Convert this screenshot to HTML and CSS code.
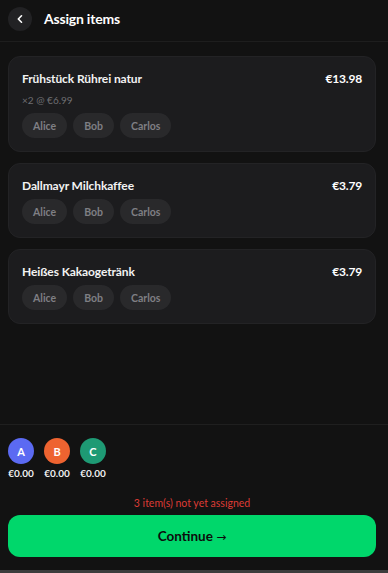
FILE: index.html
```html
<!DOCTYPE html>
<html lang="de">
<head>
<meta charset="utf-8">
<title>Assign items</title>
<link rel="stylesheet" href="styles.css">
</head>
<body>
<div class="app">
  <header class="header">
    <button class="back" aria-label="Back">
      <svg width="10" height="10" viewBox="0 0 10 10"><path d="M6.5 1.8 L3.3 5 L6.5 8.2" fill="none" stroke="#fff" stroke-width="1.6" stroke-linecap="round" stroke-linejoin="round"/></svg>
    </button>
    <h1 class="title">Assign items</h1>
  </header>
  <main class="list">
    <section class="card">
      <div class="row"><span class="name">Frühstück Rührei natur</span><span class="price">€13.98</span></div>
      <div class="sub">×2 @ €6.99</div>
      <div class="chips"><span class="chip">Alice</span><span class="chip">Bob</span><span class="chip">Carlos</span></div>
    </section>
    <section class="card">
      <div class="row"><span class="name">Dallmayr Milchkaffee</span><span class="price">€3.79</span></div>
      <div class="chips"><span class="chip">Alice</span><span class="chip">Bob</span><span class="chip">Carlos</span></div>
    </section>
    <section class="card">
      <div class="row"><span class="name">Heißes Kakaogetränk</span><span class="price">€3.79</span></div>
      <div class="chips"><span class="chip">Alice</span><span class="chip">Bob</span><span class="chip">Carlos</span></div>
    </section>
  </main>
  <footer class="footer">
    <div class="people">
      <div class="person"><span class="avatar a">A</span><span class="amt">€0.00</span></div>
      <div class="person"><span class="avatar b">B</span><span class="amt">€0.00</span></div>
      <div class="person"><span class="avatar c">C</span><span class="amt">€0.00</span></div>
    </div>
    <p class="warn">3 item(s) not yet assigned</p>
    <button class="continue">Continue <span class="arrow">→</span></button>
  </footer>
  <div class="strip"></div>
</div>
</body>
</html>
```
FILE: styles.css
```css
* { box-sizing: border-box; }
html, body { margin: 0; height: 100%; }
body {
  background: #121212;
  color: #fff;
  font-family: Lato, "Noto Sans", sans-serif;
}
.app { display: flex; flex-direction: column; height: 573px; }
.header {
  height: 42px;
  display: flex;
  align-items: center;
  gap: 12px;
  padding: 0 8px;
  border-bottom: 1px solid #1e1e1e;
  flex-shrink: 0;
}
.back {
  width: 24px; height: 24px;
  border-radius: 50%;
  border: none;
  background: #222224;
  display: flex; align-items: center; justify-content: center;
  padding: 0;
  margin-top: -4px;
}
.title { margin: 0 0 4px; font-size: 14px; font-weight: 700; letter-spacing: -0.2px; }
.list {
  flex: 1;
  display: flex;
  flex-direction: column;
  gap: 11px;
  padding: 14px 12px 0 8px;
}
.card {
  background: #1c1c1e;
  border: 1px solid #232325;
  border-radius: 12px;
  padding: 11px 13px 13px 13px;
}
.row { display: flex; justify-content: space-between; align-items: center; height: 20px; }
.name { font-size: 12px; font-weight: 700; color: #f2f2f2; letter-spacing: -0.1px; }
.price { font-size: 12px; font-weight: 700; color: #fff; letter-spacing: -0.2px; }
.sub { font-size: 10px; color: #6e6e72; margin-top: 4px; height: 16px; line-height: 16px; }
.chips { display: flex; gap: 6px; margin-top: 4px; }
.card .sub + .chips { margin-top: 5px; }
.chip {
  height: 25px;
  padding: 0 11px;
  border-radius: 13px;
  background: #29292b;
  color: #7f7f84;
  font-size: 10.5px;
  font-weight: 700;
  display: flex; align-items: center;
}
.footer {
  border-top: 1px solid #1f1f1f;
  padding: 13px 12px 13px 8px;
  flex-shrink: 0;
}
.people { display: flex; gap: 10px; }
.person { display: flex; flex-direction: column; align-items: center; width: 26px; }
.avatar {
  width: 26px; height: 26px; border-radius: 50%;
  display: flex; align-items: center; justify-content: center;
  font-size: 11px; font-weight: 700; color: #fff;
}
.avatar.a { background: #5b6af2; }
.avatar.b { background: #ee6330; }
.avatar.c { background: #1e9a74; }
.amt { font-size: 10px; font-weight: 700; margin-top: 3px; white-space: nowrap; color: #f0f0f0; }
.warn { margin: 17px 0 0; text-align: center; color: #dd3b35; font-size: 10.5px; line-height: 14px; }
.continue {
  margin-top: 5px;
  width: 100%;
  height: 42px;
  border: none;
  border-radius: 12px;
  background: #00d76b;
  color: #0c0c0c;
  font-family: inherit;
  font-size: 13.5px;
  font-weight: 700;
}
.arrow { font-family: "DejaVu Sans", sans-serif; font-weight: 400; font-size: 12px; }
.strip { height: 3px; background: #3c3c3c; flex-shrink: 0; }
```
